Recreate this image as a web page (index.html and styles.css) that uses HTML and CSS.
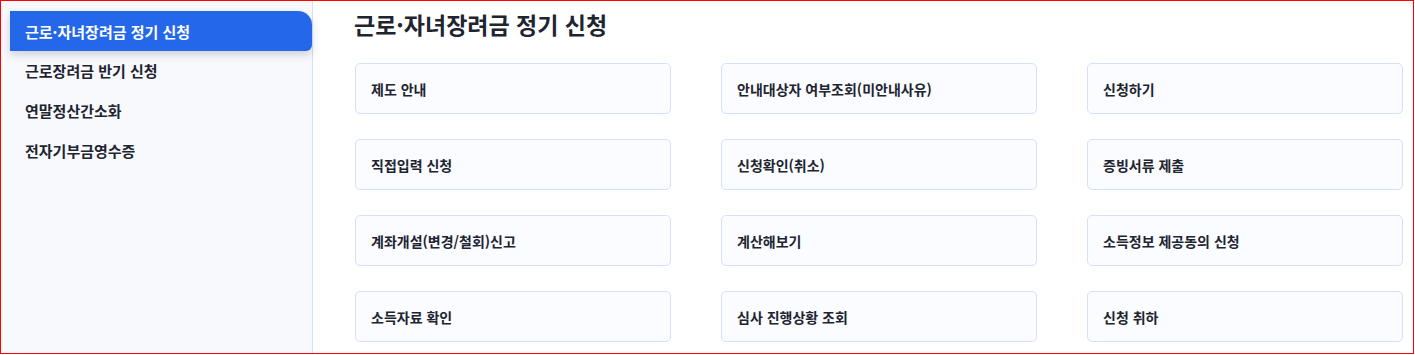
FILE: index.html
```html
<!DOCTYPE html>
<html lang="ko">
<head>
    <meta charset="UTF-8">
    <meta name="viewport" content="width=device-width, initial-scale=1.0">
    <title>근로·자녀장려금 정기 신청</title>
    <link rel="stylesheet" href="styles.css">
</head>
<body>
    <div class="frame">
        <nav class="sidebar">
            <a class="side-item active" href="#">근로·자녀장려금 정기 신청</a>
            <a class="side-item" href="#">근로장려금 반기 신청</a>
            <a class="side-item" href="#">연말정산간소화</a>
            <a class="side-item" href="#">전자기부금영수증</a>
        </nav>
        <main class="content">
            <h1>근로·자녀장려금 정기 신청</h1>
            <div class="menu-grid">
                <a class="menu-card" href="#">제도 안내</a>
                <a class="menu-card" href="#">안내대상자 여부조회(미안내사유)</a>
                <a class="menu-card" href="#">신청하기</a>
                <a class="menu-card" href="#">직접입력 신청</a>
                <a class="menu-card" href="#">신청확인(취소)</a>
                <a class="menu-card" href="#">증빙서류 제출</a>
                <a class="menu-card" href="#">계좌개설(변경/철회)신고</a>
                <a class="menu-card" href="#">계산해보기</a>
                <a class="menu-card" href="#">소득정보 제공동의 신청</a>
                <a class="menu-card" href="#">소득자료 확인</a>
                <a class="menu-card" href="#">심사 진행상황 조회</a>
                <a class="menu-card" href="#">신청 취하</a>
            </div>
        </main>
    </div>
</body>
</html>
```

FILE: styles.css
```css
body {
    margin: 0;
    font-family: "Noto Sans CJK KR", "Noto Sans", sans-serif;
    color: #1e2430;
    background: #fff;
}

a {
    text-decoration: none;
    color: inherit;
}

.frame {
    width: 1414px;
    height: 354px;
    box-sizing: border-box;
    border: 1px solid #ff0000;
    display: flex;
    overflow: hidden;
}

.sidebar {
    width: 311px;
    flex-shrink: 0;
    background-color: #f7f9fc;
    border-right: 1px solid #d3e1fb;
    padding-top: 9px;
    display: flex;
    flex-direction: column;
}

.side-item {
    height: 40px;
    display: flex;
    align-items: center;
    padding-left: 15px;
    margin-left: 9px;
    font-size: 15px;
    font-weight: 600;
    color: #1e2430;
}

.side-item.active {
    margin-top: 1px;
    margin-bottom: -1px;
    background-color: #2468e9;
    color: #fff;
    font-weight: 700;
    border-radius: 0 14px 6px 0;
    box-shadow: 0 4px 8px rgba(20, 40, 80, 0.18);
}

.content {
    flex: 1;
    padding: 7px 0 0 42px;
}

h1 {
    margin: 0 0 23px -1px;
    font-size: 23px;
    line-height: 32px;
    font-weight: 700;
    color: #1e2430;
}

.menu-grid {
    display: grid;
    grid-template-columns: repeat(3, 316px);
    grid-auto-rows: 51px;
    column-gap: 50px;
    row-gap: 25px;
}

.menu-card {
    display: flex;
    align-items: center;
    padding: 0 15px;
    background-color: #fafcff;
    border: 1px solid #d3e1fb;
    border-radius: 5px;
    font-size: 14px;
    font-weight: 600;
}
```
